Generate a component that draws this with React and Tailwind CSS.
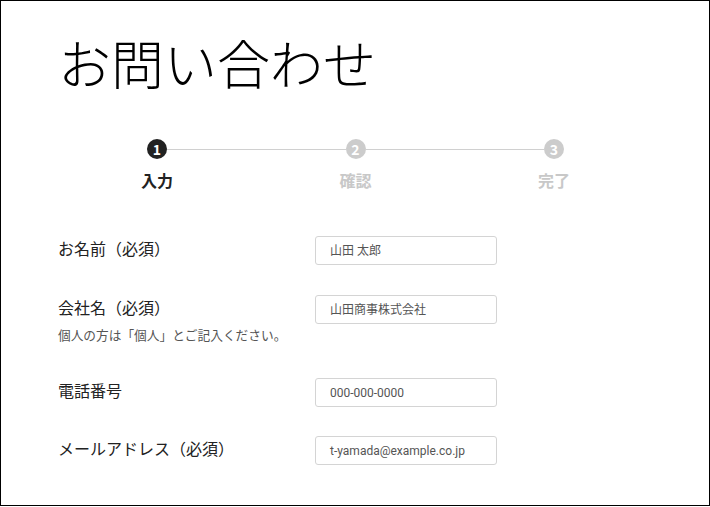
const jp = { fontFamily: '"Noto Sans CJK JP", "Noto Sans", sans-serif' }

const steps = [
  { n: 1, label: '入力', active: true },
  { n: 2, label: '確認' },
  { n: 3, label: '完了' },
]

const Step = ({ step }) => (
  <div className="flex w-[20px] flex-col items-center">
    <div
      className={`flex h-[20px] w-[20px] items-center justify-center rounded-full text-[14px] font-bold leading-none text-white ${
        step.active ? 'bg-[#222222]' : 'bg-[#cccccc]'
      }`}
    >
      {step.n}
    </div>
    <div
      className={`mt-[11px] whitespace-nowrap text-[16px] font-bold leading-[20px] ${
        step.active ? 'text-[#222222]' : 'text-[#c8c8c8]'
      }`}
    >
      {step.label}
    </div>
  </div>
)

const Field = ({ label, value, note, className = '' }) => (
  <div className={`flex items-start ${className}`}>
    <div className="w-[314px] pl-[57px]">
      <div className="mt-[2px] whitespace-nowrap text-[16px] leading-[20px] text-[#222222]">{label}</div>
      {note && (
        <div className="mt-[9px] whitespace-nowrap text-[12.7px] leading-[18px] text-[#555555]">{note}</div>
      )}
    </div>
    <div
      className="flex h-[29px] w-[182px] items-center rounded-[3px] border border-[#d4d4d4] pl-[14px] text-[12px] text-[#555555]"
      style={{ fontFamily: 'Roboto, "Noto Sans CJK JP", sans-serif' }}
    >
      {value}
    </div>
  </div>
)

export default function App() {
  return (
    <div className="h-[506px] w-[710px] overflow-hidden border border-black bg-white" style={jp}>
      <h1 className="pl-[57px] pt-[31px] text-[53px] font-light leading-[60px] text-black">お問い合わせ</h1>

      {/* Stepper */}
      <div className="ml-[146px] mt-[47px] flex w-[417px] items-start">
        <Step step={steps[0]} />
        <div className="mt-[10px] h-px flex-1 bg-[#d0d0d0]" />
        <Step step={steps[1]} />
        <div className="mt-[10px] h-px flex-1 bg-[#d0d0d0]" />
        <Step step={steps[2]} />
      </div>

      {/* Form */}
      <div className="mt-[46px]">
        <Field label="お名前（必須）" value="山田 太郎" />
        <Field
          className="mt-[30px]"
          label="会社名（必須）"
          value="山田商事株式会社"
          note="個人の方は「個人」とご記入ください。"
        />
        <Field className="mt-[34px]" label="電話番号" value="000-000-0000" />
        <Field className="mt-[29px]" label="メールアドレス（必須）" value="t-yamada@example.co.jp" />
      </div>
    </div>
  )
}
